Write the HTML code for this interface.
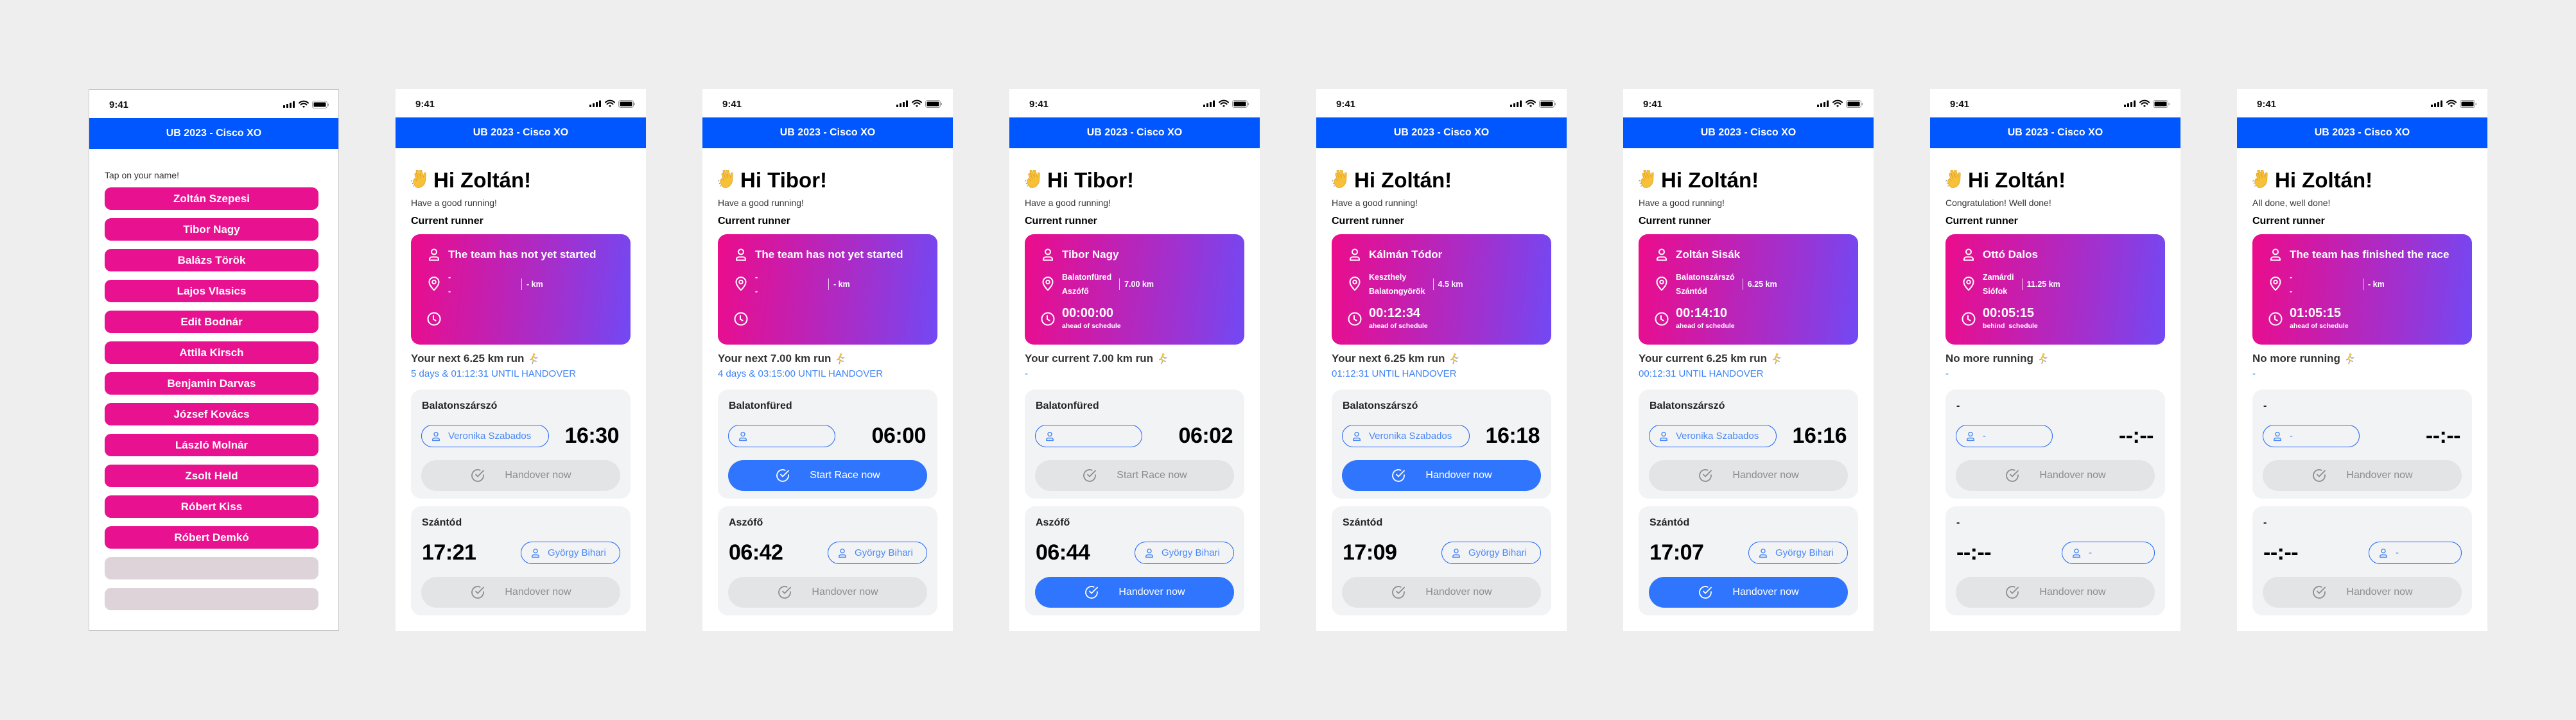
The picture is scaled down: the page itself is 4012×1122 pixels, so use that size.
<!DOCTYPE html>
<html><head><meta charset="utf-8">
<style>
*{margin:0;padding:0;box-sizing:border-box}
body{width:4012px;height:1122px;background:#eeeeee;position:relative;overflow:hidden;font-family:"Liberation Sans",Arial,sans-serif;color:#111}
.ph{position:absolute;top:139px;width:390px;height:844px;background:#fff;overflow:hidden}
.ph.b{border:1px solid #c8c8c8}
.ph>*{position:absolute}
.t941{left:31px;top:14px;font-weight:600;font-size:15px;line-height:20px;color:#111}
.sic{left:302px;top:16px}
.hd{top:44px;left:0;width:100%;height:48px;background:#0057ff;color:#fff;font-weight:bold;font-size:16px;line-height:48px;text-align:center}
.tap{left:24px;top:124px;font-size:14px;line-height:18px;color:#333}
.nb{left:24px;width:333px;height:35px;border-radius:10px;background:#e8118f;color:#fff;font-weight:bold;font-size:17px;line-height:35px;text-align:center}
.nb.e{background:#ddd3d8}
.hi{left:24px;top:122px;font-weight:bold;font-size:33px;line-height:40px;display:flex;align-items:center;gap:3px;color:#000}
.sub{left:24px;top:168px;font-size:14px;line-height:18px;color:#333}
.cr{left:24px;top:196px;font-weight:bold;font-size:16px;line-height:20px;color:#000}
.card{left:24px;top:226px;width:342px;height:172px;border-radius:14px;background:linear-gradient(96deg,#ec0c8b 0%,#c61eae 35%,#9c33d3 70%,#7149f4 100%);color:#fff}
.card>*{position:absolute}
.card svg{left:24px;width:24px;height:24px}
.cn{left:58px;top:21px;font-weight:bold;font-size:17px;line-height:22px;white-space:nowrap}
.loc{left:58px;top:56px;display:flex;align-items:center;font-weight:bold;font-size:12.5px}
.sts{line-height:22px}
.sts.d{min-width:102px}
.dv{width:1px;height:18px;background:rgba(255,255,255,.8);margin:0 7px 0 12px}
.tm{left:58px;top:111px;font-weight:bold;font-size:20px;line-height:24px}
.tl{left:58px;top:136px;font-weight:bold;font-size:10.5px;line-height:14px}
.nx{left:24px;top:409px;font-weight:bold;font-size:17px;line-height:22px;color:#333;display:flex;align-items:center;gap:4px}
.cd{left:24px;top:435px;font-size:15px;line-height:18px;color:#3f83f6}
.sec{left:24px;width:342px;height:170px;border-radius:16px;background:#f2f3f5}
.sec>*{position:absolute}
.tt{left:17px;top:16px;font-weight:bold;font-size:16px;line-height:20px;color:#222}
.pill{top:55px;height:35px;border:1.5px solid #1f66f5;border-radius:18px;color:#4a88f7;font-size:15px;display:flex;align-items:center;padding-left:13px;gap:10px;white-space:nowrap}
.pill svg{width:18px;height:18px;flex:none}
.time{top:52px;font-weight:900;font-size:34px;line-height:40px;color:#000;letter-spacing:-0.5px}
.btn{left:16px;top:110px;width:310px;height:48px;border-radius:24px;background:#e3e4e5;color:#8d8d8d;font-size:16px;display:flex;align-items:center;justify-content:center;gap:30px}
.btn svg{width:24px;height:24px}
.btn.on{background:#2f75fe;color:#fff}
</style></head><body>
<svg width="0" height="0" style="position:absolute">
<symbol id="u" viewBox="0 0 24 24"><g fill="none" stroke="currentColor" stroke-width="2" stroke-linecap="round" stroke-linejoin="round"><circle cx="12" cy="7.5" r="4"/><path d="M5 20.5v-1.5a3.5 3.5 0 0 1 3.5-3.5h7a3.5 3.5 0 0 1 3.5 3.5v1.5z"/></g></symbol>
<symbol id="p" viewBox="0 0 24 24"><g fill="none" stroke="currentColor" stroke-width="2" stroke-linejoin="round"><path d="M12 22s-7.5-6.8-7.5-12.5a7.5 7.5 0 0 1 15 0C19.5 15.2 12 22 12 22z"/><circle cx="12" cy="9.5" r="2.7"/></g></symbol>
<symbol id="c" viewBox="0 0 24 24"><g fill="none" stroke="currentColor" stroke-width="2" stroke-linecap="round" stroke-linejoin="round"><circle cx="12" cy="12" r="9.5"/><path d="M11 7v5.5l3.5 2"/></g></symbol>
<symbol id="k" viewBox="0 0 24 24"><g fill="none" stroke="currentColor" stroke-width="1.8" stroke-linecap="round" stroke-linejoin="round"><path d="M21 11.1V12a9 9 0 1 1-5.3-8.2"/><path d="M21 4.5 12 13.5l-3-3"/></g></symbol>
<symbol id="w" viewBox="0 0 32 32"><path d="M9 27c-4-3-6-8-5-11l2-3 3 4-3-10c-.5-2 2-3 3-1l3 8-4-12c-.5-2 2.5-3 3.5-1l4 11-2-11c-.3-2 2.7-2.5 3.2-.5l3 11 .5-6c.3-2 3-2 3 0l-.5 10c-.5 5-3 9-7 11-3 1.5-6 1-8 0z" fill="#f6c138" stroke="#e0a020" stroke-width=".8"/><path d="M3 20l-1 2M2 16l-1.5 1.5M5 24l-1.5 1.5" stroke="#888" stroke-width="1"/></symbol>
<symbol id="r" viewBox="0 0 24 24"><circle cx="14" cy="4" r="2.2" fill="#f3c13a"/><path d="M13 7l-3 5 3 3-2 6M11 12l-4 2M13 8l4 3 3-1M13 15l5 2" fill="none" stroke="#aaa" stroke-width="2" stroke-linecap="round"/><path d="M12 7.5l-2 4.5 3 3" fill="none" stroke="#f3c13a" stroke-width="2.5" stroke-linecap="round"/></symbol>
<symbol id="s" viewBox="0 0 72 14"><rect x="0" y="8" width="3" height="4" rx=".7" fill="#000"/><rect x="5" y="6" width="3" height="6" rx=".7" fill="#000"/><rect x="10" y="4" width="3" height="8" rx=".7" fill="#000"/><rect x="15" y="1.5" width="3" height="10.5" rx=".7" fill="#000"/><path d="M25 4.5a10 10 0 0 1 14 0M27.5 7.2a6.3 6.3 0 0 1 9 0" fill="none" stroke="#000" stroke-width="2" stroke-linecap="round"/><path d="M30 10a2.6 2.6 0 0 1 4 0L32 12z" fill="#000"/><rect x="45.5" y="1.5" width="23" height="11" rx="3" fill="none" stroke="#999" stroke-width="1"/><rect x="47.5" y="3.5" width="19" height="7" rx="1.5" fill="#000"/><rect x="69.5" y="5.5" width="1.5" height="3.5" rx=".7" fill="#999"/></symbol>
</svg>

<!-- Phone 1 -->
<div class="ph b" style="left:138px">
<div class="t941">9:41</div><svg class="sic" width="72" height="14"><use href="#s"/></svg>
<div class="hd">UB 2023 - Cisco XO</div>
<div class="tap">Tap on your name!</div>
<div class="nb" style="top:152px">Zoltán Szepesi</div>
<div class="nb" style="top:200px">Tibor Nagy</div>
<div class="nb" style="top:248px">Balázs Török</div>
<div class="nb" style="top:296px">Lajos Vlasics</div>
<div class="nb" style="top:344px">Edit Bodnár</div>
<div class="nb" style="top:392px">Attila Kirsch</div>
<div class="nb" style="top:440px">Benjamin Darvas</div>
<div class="nb" style="top:488px">József Kovács</div>
<div class="nb" style="top:536px">László Molnár</div>
<div class="nb" style="top:584px">Zsolt Held</div>
<div class="nb" style="top:632px">Róbert Kiss</div>
<div class="nb" style="top:680px">Róbert Demkó</div>
<div class="nb e" style="top:728px"></div>
<div class="nb e" style="top:776px"></div>
</div>

<!-- Phone 2 -->
<div class="ph" style="left:616px">
<div class="t941">9:41</div><svg class="sic" width="72" height="14"><use href="#s"/></svg>
<div class="hd">UB 2023 - Cisco XO</div>
<div class="hi"><svg width="32" height="32"><use href="#w"/></svg>Hi Zoltán!</div>
<div class="sub">Have a good running!</div>
<div class="cr">Current runner</div>
<div class="card">
<svg style="top:20px"><use href="#u"/></svg><div class="cn">The team has not yet started</div>
<svg style="top:65px"><use href="#p"/></svg><div class="loc"><div class="sts d">-<br>-</div><div class="dv"></div>- km</div>
<svg style="top:120px"><use href="#c"/></svg>
</div>
<div class="nx">Your next 6.25 km run <svg width="20" height="20"><use href="#r"/></svg></div>
<div class="cd">5 days &amp; 01:12:31 UNTIL HANDOVER</div>
<div class="sec" style="top:468px"><div class="tt">Balatonszárszó</div>
<div class="pill" style="left:16px;width:199px"><svg><use href="#u"/></svg>Veronika Szabados</div>
<div class="time" style="right:18px">16:30</div>
<div class="btn"><svg><use href="#k"/></svg>Handover now</div></div>
<div class="sec" style="top:650px"><div class="tt">Szántód</div>
<div class="time" style="left:17px">17:21</div>
<div class="pill" style="right:16px;width:155px"><svg><use href="#u"/></svg>György Bihari</div>
<div class="btn"><svg><use href="#k"/></svg>Handover now</div></div>
</div>

<!-- Phone 3 -->
<div class="ph" style="left:1094px">
<div class="t941">9:41</div><svg class="sic" width="72" height="14"><use href="#s"/></svg>
<div class="hd">UB 2023 - Cisco XO</div>
<div class="hi"><svg width="32" height="32"><use href="#w"/></svg>Hi Tibor!</div>
<div class="sub">Have a good running!</div>
<div class="cr">Current runner</div>
<div class="card">
<svg style="top:20px"><use href="#u"/></svg><div class="cn">The team has not yet started</div>
<svg style="top:65px"><use href="#p"/></svg><div class="loc"><div class="sts d">-<br>-</div><div class="dv"></div>- km</div>
<svg style="top:120px"><use href="#c"/></svg>
</div>
<div class="nx">Your next 7.00 km run <svg width="20" height="20"><use href="#r"/></svg></div>
<div class="cd">4 days &amp; 03:15:00 UNTIL HANDOVER</div>
<div class="sec" style="top:468px"><div class="tt">Balatonfüred</div>
<div class="pill" style="left:16px;width:167px"><svg><use href="#u"/></svg></div>
<div class="time" style="right:18px">06:00</div>
<div class="btn on"><svg><use href="#k"/></svg>Start Race now</div></div>
<div class="sec" style="top:650px"><div class="tt">Aszófő</div>
<div class="time" style="left:17px">06:42</div>
<div class="pill" style="right:16px;width:155px"><svg><use href="#u"/></svg>György Bihari</div>
<div class="btn"><svg><use href="#k"/></svg>Handover now</div></div>
</div>

<!-- Phone 4 -->
<div class="ph" style="left:1572px">
<div class="t941">9:41</div><svg class="sic" width="72" height="14"><use href="#s"/></svg>
<div class="hd">UB 2023 - Cisco XO</div>
<div class="hi"><svg width="32" height="32"><use href="#w"/></svg>Hi Tibor!</div>
<div class="sub">Have a good running!</div>
<div class="cr">Current runner</div>
<div class="card">
<svg style="top:20px"><use href="#u"/></svg><div class="cn">Tibor Nagy</div>
<svg style="top:65px"><use href="#p"/></svg><div class="loc"><div class="sts">Balatonfüred<br>Aszófő</div><div class="dv"></div>7.00 km</div>
<svg style="top:120px"><use href="#c"/></svg><div class="tm">00:00:00</div><div class="tl">ahead of schedule</div>
</div>
<div class="nx">Your current 7.00 km run <svg width="20" height="20"><use href="#r"/></svg></div>
<div class="cd">-</div>
<div class="sec" style="top:468px"><div class="tt">Balatonfüred</div>
<div class="pill" style="left:16px;width:167px"><svg><use href="#u"/></svg></div>
<div class="time" style="right:18px">06:02</div>
<div class="btn"><svg><use href="#k"/></svg>Start Race now</div></div>
<div class="sec" style="top:650px"><div class="tt">Aszófő</div>
<div class="time" style="left:17px">06:44</div>
<div class="pill" style="right:16px;width:155px"><svg><use href="#u"/></svg>György Bihari</div>
<div class="btn on"><svg><use href="#k"/></svg>Handover now</div></div>
</div>

<!-- Phone 5 -->
<div class="ph" style="left:2050px">
<div class="t941">9:41</div><svg class="sic" width="72" height="14"><use href="#s"/></svg>
<div class="hd">UB 2023 - Cisco XO</div>
<div class="hi"><svg width="32" height="32"><use href="#w"/></svg>Hi Zoltán!</div>
<div class="sub">Have a good running!</div>
<div class="cr">Current runner</div>
<div class="card">
<svg style="top:20px"><use href="#u"/></svg><div class="cn">Kálmán Tódor</div>
<svg style="top:65px"><use href="#p"/></svg><div class="loc"><div class="sts">Keszthely<br>Balatongyörök</div><div class="dv"></div>4.5 km</div>
<svg style="top:120px"><use href="#c"/></svg><div class="tm">00:12:34</div><div class="tl">ahead of schedule</div>
</div>
<div class="nx">Your next 6.25 km run <svg width="20" height="20"><use href="#r"/></svg></div>
<div class="cd">01:12:31 UNTIL HANDOVER</div>
<div class="sec" style="top:468px"><div class="tt">Balatonszárszó</div>
<div class="pill" style="left:16px;width:199px"><svg><use href="#u"/></svg>Veronika Szabados</div>
<div class="time" style="right:18px">16:18</div>
<div class="btn on"><svg><use href="#k"/></svg>Handover now</div></div>
<div class="sec" style="top:650px"><div class="tt">Szántód</div>
<div class="time" style="left:17px">17:09</div>
<div class="pill" style="right:16px;width:155px"><svg><use href="#u"/></svg>György Bihari</div>
<div class="btn"><svg><use href="#k"/></svg>Handover now</div></div>
</div>

<!-- Phone 6 -->
<div class="ph" style="left:2528px">
<div class="t941">9:41</div><svg class="sic" width="72" height="14"><use href="#s"/></svg>
<div class="hd">UB 2023 - Cisco XO</div>
<div class="hi"><svg width="32" height="32"><use href="#w"/></svg>Hi Zoltán!</div>
<div class="sub">Have a good running!</div>
<div class="cr">Current runner</div>
<div class="card">
<svg style="top:20px"><use href="#u"/></svg><div class="cn">Zoltán Sisák</div>
<svg style="top:65px"><use href="#p"/></svg><div class="loc"><div class="sts">Balatonszárszó<br>Szántód</div><div class="dv"></div>6.25 km</div>
<svg style="top:120px"><use href="#c"/></svg><div class="tm">00:14:10</div><div class="tl">ahead of schedule</div>
</div>
<div class="nx">Your current 6.25 km run <svg width="20" height="20"><use href="#r"/></svg></div>
<div class="cd">00:12:31 UNTIL HANDOVER</div>
<div class="sec" style="top:468px"><div class="tt">Balatonszárszó</div>
<div class="pill" style="left:16px;width:199px"><svg><use href="#u"/></svg>Veronika Szabados</div>
<div class="time" style="right:18px">16:16</div>
<div class="btn"><svg><use href="#k"/></svg>Handover now</div></div>
<div class="sec" style="top:650px"><div class="tt">Szántód</div>
<div class="time" style="left:17px">17:07</div>
<div class="pill" style="right:16px;width:155px"><svg><use href="#u"/></svg>György Bihari</div>
<div class="btn on"><svg><use href="#k"/></svg>Handover now</div></div>
</div>

<!-- Phone 7 -->
<div class="ph" style="left:3006px">
<div class="t941">9:41</div><svg class="sic" width="72" height="14"><use href="#s"/></svg>
<div class="hd">UB 2023 - Cisco XO</div>
<div class="hi"><svg width="32" height="32"><use href="#w"/></svg>Hi Zoltán!</div>
<div class="sub">Congratulation! Well done!</div>
<div class="cr">Current runner</div>
<div class="card">
<svg style="top:20px"><use href="#u"/></svg><div class="cn">Ottó Dalos</div>
<svg style="top:65px"><use href="#p"/></svg><div class="loc"><div class="sts">Zamárdi<br>Siófok</div><div class="dv"></div>11.25 km</div>
<svg style="top:120px"><use href="#c"/></svg><div class="tm">00:05:15</div><div class="tl">behind&nbsp; schedule</div>
</div>
<div class="nx">No more running <svg width="20" height="20"><use href="#r"/></svg></div>
<div class="cd">-</div>
<div class="sec" style="top:468px"><div class="tt">-</div>
<div class="pill" style="left:16px;width:151px"><svg><use href="#u"/></svg>-</div>
<div class="time" style="right:18px">--:--</div>
<div class="btn"><svg><use href="#k"/></svg>Handover now</div></div>
<div class="sec" style="top:650px"><div class="tt">-</div>
<div class="time" style="left:17px">--:--</div>
<div class="pill" style="right:16px;width:145px"><svg><use href="#u"/></svg>-</div>
<div class="btn"><svg><use href="#k"/></svg>Handover now</div></div>
</div>

<!-- Phone 8 -->
<div class="ph" style="left:3484px">
<div class="t941">9:41</div><svg class="sic" width="72" height="14"><use href="#s"/></svg>
<div class="hd">UB 2023 - Cisco XO</div>
<div class="hi"><svg width="32" height="32"><use href="#w"/></svg>Hi Zoltán!</div>
<div class="sub">All done, well done!</div>
<div class="cr">Current runner</div>
<div class="card">
<svg style="top:20px"><use href="#u"/></svg><div class="cn">The team has finished the race</div>
<svg style="top:65px"><use href="#p"/></svg><div class="loc"><div class="sts d">-<br>-</div><div class="dv"></div>- km</div>
<svg style="top:120px"><use href="#c"/></svg><div class="tm">01:05:15</div><div class="tl">ahead of schedule</div>
</div>
<div class="nx">No more running <svg width="20" height="20"><use href="#r"/></svg></div>
<div class="cd">-</div>
<div class="sec" style="top:468px"><div class="tt">-</div>
<div class="pill" style="left:16px;width:151px"><svg><use href="#u"/></svg>-</div>
<div class="time" style="right:18px">--:--</div>
<div class="btn"><svg><use href="#k"/></svg>Handover now</div></div>
<div class="sec" style="top:650px"><div class="tt">-</div>
<div class="time" style="left:17px">--:--</div>
<div class="pill" style="right:16px;width:145px"><svg><use href="#u"/></svg>-</div>
<div class="btn"><svg><use href="#k"/></svg>Handover now</div></div>
</div>
</body></html>
